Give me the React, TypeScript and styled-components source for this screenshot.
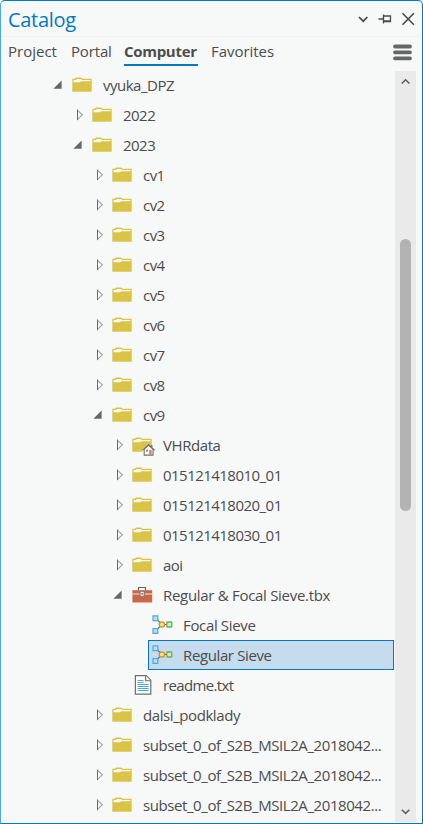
import React from "react";
import styled, { createGlobalStyle, css } from "styled-components";

const GlobalStyle = createGlobalStyle`
  * { box-sizing: border-box; }
  body { margin: 0; background: #f7f9f8; }
`;

const Pane = styled.div`
  width: 423px;
  height: 824px;
  display: flex;
  flex-direction: column;
  overflow: hidden;
  background: #f7f9f8;
  border: 1px solid #0079c1;
  border-left-color: #5ba5d6;
  border-radius: 5px 5px 0 0;
  font-family: "Open Sans", "Noto Sans", sans-serif;
  color: #4c4c4c;
`;

const TitleBar = styled.header`
  height: 36px;
  flex: none;
  display: flex;
  align-items: center;
  justify-content: space-between;
  border-bottom: 1px solid #eff1f0;
  border-left: 1px solid #0079c1;
  margin-left: -1px;
  padding: 0 6px 0 7px;
`;

const Title = styled.h1<{ $track: number }>`
  margin: 3px 0 0;
  font-size: 20px;
  line-height: 30px;
  font-weight: 400;
  color: #0079c1;
  letter-spacing: ${(p) => p.$track}px;
`;

const WindowButtons = styled.div`
  display: flex;
  svg { display: block; }
`;

const TabBar = styled.nav`
  height: 34px;
  flex: none;
  display: flex;
  align-items: flex-start;
  padding: 2px 10px 0 7px;
`;

const Tab = styled.div<{ $width: number; $track: number; $active?: boolean }>`
  width: ${(p) => p.$width}px;
  height: 27px;
  flex: none;
  margin-right: 13px;
  font-size: 15px;
  line-height: 24px;
  white-space: nowrap;
  letter-spacing: ${(p) => p.$track}px;
  ${(p) =>
    p.$active &&
    css`
      font-weight: 700;
      border-bottom: 2px solid #0079c1;
    `}
`;

const MenuButton = styled.div`
  margin-left: auto;
  padding-top: 4px;
  svg { display: block; }
`;

const Body = styled.main`
  flex: 1;
  min-height: 0;
  display: flex;
`;

const Tree = styled.div`
  width: 394px;
  flex: none;
  overflow: hidden;
  margin-top: -1px;
`;

const Row = styled.div<{ $depth: number; $selected?: boolean }>`
  height: 30px;
  margin-left: ${(p) => 47 + p.$depth * 20}px;
  margin-right: 1px;
  display: flex;
  align-items: center;
  border: 1px solid ${(p) => (p.$selected ? "#0079c1" : "transparent")};
  background: ${(p) => (p.$selected ? "#c5dbee" : "transparent")};
  svg { display: block; flex: none; }
`;

const Twisty = styled.span`
  width: 20px;
  flex: none;
  padding-left: 3px;
`;

const IconSlot = styled.span`
  width: 34px;
  flex: none;
  padding-left: 3px;
`;

const Label = styled.span<{ $track: number }>`
  font-size: 15px;
  line-height: 28px;
  white-space: nowrap;
  letter-spacing: ${(p) => p.$track}px;
`;

const ScrollTrack = styled.div`
  width: 21px;
  display: flex;
  flex-direction: column;
  align-items: center;
  background: #eaeaea;
  margin-bottom: 1px;
  svg { display: block; flex: none; }
`;

const Thumb = styled.div`
  width: 11px;
  height: 272px;
  margin-top: 147px;
  margin-bottom: auto;
  border-radius: 5.5px;
  background: #b3b3b3;
`;

const FolderShape = () => (
  <>
    <path d="M.3 15.8V2.8H2.6L4 1.4h5L10.4 2.8H19.7v13z" fill="#dac448" />
    <path d="M1.6 4h2.2L5 3h3.6l1.3 1h8.5v1.3H9.4L8 6.2H1.6z" fill="#fbfaf0" />
  </>
);

const Folder = () => (
  <svg width="21" height="18" viewBox="0 0 21 18">
    <FolderShape />
  </svg>
);

const HomeFolder = () => (
  <svg width="24" height="24" viewBox="0 -3 24 24">
    <FolderShape />
    <path d="M9.8 14 16.5 7.4 23 14v1.2h-.8v4.6H10.8v-4.6h-1z" fill="#f7f9f8" />
    <path d="M12.2 13.2v5.9h8.8v-5.9L16.6 9z" fill="#fff" stroke="#6e6e6e" strokeWidth="1.1" />
    <path d="M10.4 14.4 16.5 8.6l6.2 5.8M19.8 11.2V9" fill="none" stroke="#6e6e6e" strokeWidth="1.3" />
    <path d="M14 13.8h2v2h-2z" fill="#8b8b8b" />
    <path d="M17.3 13.9h2.3v4.7h-2.3z" fill="#c57d4c" />
  </svg>
);

const Toolbox = () => (
  <svg width="21" height="18" viewBox="0 0 21 18">
    <path d="M6.5 4.5v-3h7v3" fill="none" stroke="#666" strokeWidth="1.2" />
    <path d="M.4 4.2h19.8v12.3H.4z" fill="#cb6747" />
    <path d="M.4 8h7.4M12.7 8h7.5" stroke="#f5e4df" strokeWidth="1" />
    <path d="M8.1 5.3h4.1v5H8.1z" fill="#f7f4f2" stroke="#696969" strokeWidth=".8" />
    <path d="M9.3 7h1.8v1.6H9.3z" fill="#777" />
  </svg>
);

const Model = () => (
  <svg width="21" height="20" viewBox="0 0 21 20">
    <path d="M5.5 5 9 8.5M5.5 14 9 10.3M12 9.5h3" fill="none" stroke="#666" strokeWidth="1.1" />
    <path d="M1 .8h4.8v4.8H1zM1 13.6h4.8v4.8H1z" fill="#b5e0fa" stroke="#56a7d6" strokeWidth="1.2" />
    <circle cx="9.9" cy="9.5" r="2.6" fill="#fde28a" stroke="#c99231" strokeWidth="1.3" />
    <rect x="14.8" y="7" width="5" height="5" rx=".5" fill="#cfeccb" stroke="#6bab68" strokeWidth="1.3" />
  </svg>
);

const TextFile = () => (
  <svg width="21" height="20" viewBox="0 0 21 20">
    <path d="M3.4.7h10.8l4.6 4.6v13.9H3.4z" fill="#fff" stroke="#6e6e6e" strokeWidth="1.2" />
    <path d="M13.6.8v5h5" fill="#f7f7f7" stroke="#6e6e6e" strokeWidth="1.1" />
    <path d="M5.5 5.5h6M5.5 7.5h6M5.5 9.5h11.2M5.5 11.5h11.2M5.5 13.5h11.2M5.5 15.5h11.2" stroke="#53a6dd" strokeWidth="1" />
  </svg>
);

const icons = { folder: Folder, home: HomeFolder, toolbox: Toolbox, model: Model, text: TextFile };

const Expander = ({ state }: { state: "open" | "closed" | "none" }) => (
  <svg width="14" height="14" viewBox="0 0 14 14">
    {state === "open" && <path d="M9.6 2.5v8.3H1.4z" fill="#666" />}
    {state === "closed" && (
      <>
        <path d="M5.5 2.3 10.4 6.8 5.5 11.4" fill="none" stroke="#a0a0a0" strokeWidth="1.1" />
        <path d="M5.5 1.5v10.7" stroke="#6a6a6a" strokeWidth="1" />
      </>
    )}
  </svg>
);

type Item = {
  name: string;
  depth: number;
  state: "open" | "closed" | "none";
  icon?: keyof typeof icons;
  track?: number;
  selected?: boolean;
};

const items: Item[] = [
  { name: "vyuka_DPZ", depth: 0, state: "open", track: -0.5 },
  { name: "2022", depth: 1, state: "closed" },
  { name: "2023", depth: 1, state: "open" },
  { name: "cv1", depth: 2, state: "closed" },
  { name: "cv2", depth: 2, state: "closed" },
  { name: "cv3", depth: 2, state: "closed" },
  { name: "cv4", depth: 2, state: "closed" },
  { name: "cv5", depth: 2, state: "closed" },
  { name: "cv6", depth: 2, state: "closed" },
  { name: "cv7", depth: 2, state: "closed" },
  { name: "cv8", depth: 2, state: "closed" },
  { name: "cv9", depth: 2, state: "open" },
  { name: "VHRdata", depth: 3, state: "closed", icon: "home", track: -0.42 },
  { name: "015121418010_01", depth: 3, state: "closed" },
  { name: "015121418020_01", depth: 3, state: "closed" },
  { name: "015121418030_01", depth: 3, state: "closed" },
  { name: "aoi", depth: 3, state: "closed" },
  { name: "Regular & Focal Sieve.tbx", depth: 3, state: "open", icon: "toolbox", track: -0.3 },
  { name: "Focal Sieve", depth: 4, state: "none", icon: "model", track: -0.35 },
  { name: "Regular Sieve", depth: 4, state: "none", icon: "model", track: -0.38, selected: true },
  { name: "readme.txt", depth: 3, state: "none", icon: "text", track: -0.65 },
  { name: "dalsi_podklady", depth: 2, state: "closed", track: -0.42 },
  { name: "subset_0_of_S2B_MSIL2A_2018042...", depth: 2, state: "closed", track: -0.42 },
  { name: "subset_0_of_S2B_MSIL2A_2018042...", depth: 2, state: "closed", track: -0.42 },
  { name: "subset_0_of_S2B_MSIL2A_2018042...", depth: 2, state: "closed", track: -0.42 },
];

const TreeItem = ({ name, depth, state, icon = "folder", track = -0.53, selected }: Item) => {
  const Icon = icons[icon];
  const leaf = depth === 4;
  return (
    <Row $depth={leaf ? 5 : depth} $selected={selected}>
      {!leaf && (
        <Twisty>
          <Expander state={state} />
        </Twisty>
      )}
      <IconSlot>
        <Icon />
      </IconSlot>
      <Label $track={track}>{name}</Label>
    </Row>
  );
};

export default function App() {
  return (
    <>
      <GlobalStyle />
      <Pane>
        <TitleBar>
          <Title $track={-0.3}>Catalog</Title>
          <WindowButtons>
            <svg width="68" height="20" viewBox="0 0 68 20" fill="none" stroke="#484848">
              <path d="m11 8 4.2 4.2L19.4 8" strokeWidth="1.7" />
              <path d="M30.5 10h5M35.5 5.5v9M35.5 7h7v5.5h-7M35.5 12h7" strokeWidth="1.3" />
              <path d="m54.5 4.3 11.4 11.4m0-11.4L54.5 15.7" strokeWidth="1.6" />
            </svg>
          </WindowButtons>
        </TitleBar>
        <TabBar>
          <Tab $width={50} $track={0}>Project</Tab>
          <Tab $width={40} $track={-0.15}>Portal</Tab>
          <Tab $width={74} $track={-0.3} $active>Computer</Tab>
          <Tab $width={64} $track={-0.05}>Favorites</Tab>
          <MenuButton>
            <svg width="19" height="18" viewBox="0 0 19 18">
              <path d="M2 3.5h15M2 9.3h15M2 15.3h15" stroke="#666" strokeWidth="3.8" strokeLinecap="round" />
            </svg>
          </MenuButton>
        </TabBar>
        <Body>
          <Tree>
            {items.map((item, i) => (
              <TreeItem key={i} {...item} />
            ))}
          </Tree>
          <ScrollTrack>
            <svg width="21" height="21" viewBox="0 0 21 21" fill="none" stroke="#606060" strokeWidth="1.6">
              <path d="m6.8 12.5 3.8-3.7 3.8 3.7" />
            </svg>
            <Thumb />
            <svg width="21" height="21" viewBox="0 0 21 21" fill="none" stroke="#606060" strokeWidth="1.6">
              <path d="m6.8 8.7 3.8 3.7 3.8-3.7" />
            </svg>
          </ScrollTrack>
        </Body>
      </Pane>
    </>
  );
}
